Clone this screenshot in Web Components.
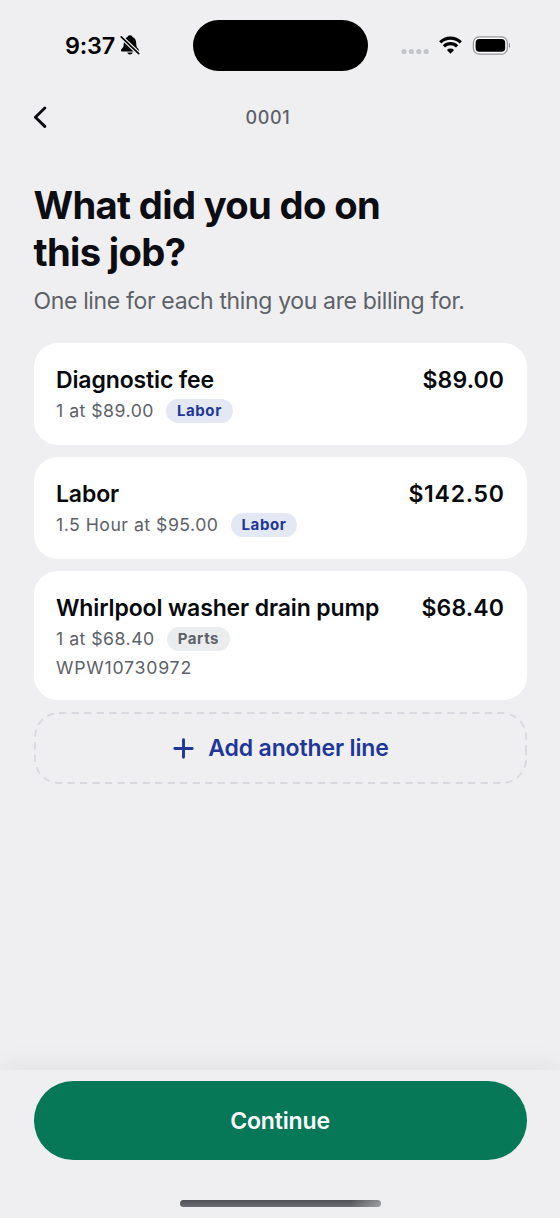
<!DOCTYPE html>
<html lang="en">
<head>
<meta charset="utf-8">
<title>Job lines</title>
<style>
html, body { margin: 0; height: 100%; }
body { background: #efeff1; font-family: Inter, "Liberation Sans", sans-serif; color: #0b0d12; overflow: hidden; }
</style>
</head>
<body>
<job-screen></job-screen>
<script>
const define = (name, html) => customElements.define(name, class extends HTMLElement {
  constructor() {
    super();
    const t = document.createElement('template');
    t.innerHTML = html;
    this.attachShadow({ mode: 'open' }).append(t.content.cloneNode(true));
  }
});

define('status-bar', `
<style>
:host { display: grid; grid-template-columns: 192.5px 175px 1fr; height: 90px; align-items: center; color: #000; }
.left { display: flex; align-items: center; padding-left: 65px; gap: 5px; }
.time { font-size: 23.4px; font-weight: 600; line-height: 28px; padding-top: 1px; white-space: nowrap; letter-spacing: -0.2px; }
.island { height: 51px; border-radius: 26px; background: #000; }
.right { display: flex; align-items: center; padding-left: 32.500px; }
svg { display: block; }
</style>
<div class="left"><span class="time">9:37</span>
<svg width="20" height="22" viewBox="0 0 20 22"><path d="M10 1.2c-1.4 0-2.3.8-2.6 1.9C5 4 3.900 6.200 3.800 9c-.1 3-.5 4.300-1.500 5.300C1.500 15.200 1 15.600 1 16.400c0 .7.500 1.100 1.300 1.100h15.400c.8 0 1.300-.4 1.300-1.100 0-.8-.5-1.200-1.300-2.100-1-1-1.400-2.300-1.500-5.300-.1-2.800-1.200-5-3.600-5.900C12.300 2 11.400 1.200 10 1.200zM7.300 18.600h5.400c-.2 1.200-1.300 2-2.700 2s-2.500-.8-2.700-2z"/><path d="M.8 2.500 18.800 19.700" stroke="#efeff1" stroke-width="4"/><path d="M1.200 2.900 18.700 19.600" stroke="#000" stroke-width="1.600" stroke-linecap="round"/></svg></div>
<div class="island"></div>
<div class="right">
<svg width="110" height="24" viewBox="0 0 110 24"><g fill="#c3c4c8"><circle cx="4" cy="18.500" r="2.600"/><circle cx="11.400" cy="18.500" r="2.600"/><circle cx="18.800" cy="18.500" r="2.600"/><circle cx="26.200" cy="18.500" r="2.600"/></g>
<g fill="none" stroke="#000" stroke-width="3.200"><path d="M40.200 9.300a14.700 14.700 0 0 1 20.600 0"/><path d="M43.900 13.300a9.400 9.400 0 0 1 13.200 0"/></g><path d="M46.900 16.900a5.200 5.200 0 0 1 7.200 0L50.500 20.800z"/>
<rect x="73.400" y="3.900" width="34" height="17.200" rx="5.800" fill="#fafafa" stroke="#97989b" stroke-width="1.300"/><rect x="75.600" y="6.100" width="29.600" height="12.700" rx="3.800"/><path d="M109 10.100c1.900.7 1.900 4.100 0 4.800z" fill="#8e8f93"/></svg>
</div>`);

define('nav-bar', `
<style>
:host { display: grid; grid-template-columns: 1fr auto 1fr; align-items: center; height: 54px; padding: 0 33px; }
svg { display: block; }
span { font-size: 18px; line-height: 24px; font-weight: 500; color: #5d6168; letter-spacing: 0.65px; padding: 1.500px 24px 0 0; }
</style>
<svg width="15" height="22" viewBox="0 0 15 22"><path d="M11.800 2 2.400 11.200l9.400 9.200" fill="none" stroke="#0b0d12" stroke-width="2.900" stroke-linecap="round" stroke-linejoin="round"/></svg>
<span><slot></slot></span>`);

define('page-heading', `
<style>
:host { display: block; padding: 38px 33.500px 0; }
h1 { margin: 0; font-size: 38.2px; line-height: 47px; font-weight: 700; letter-spacing: -0.66px; white-space: nowrap; }
p { margin: 10px 0 0; font-size: 23px; line-height: 30px; color: #5d6168; letter-spacing: -0.35px; white-space: nowrap; }
</style>
<h1><slot></slot></h1><p><slot name="sub"></slot></p>`);

define('kind-pill', `
<style>
:host { display: block; height: 24px; border-radius: 12px; padding: 0 11px; background: #e4e8f5; color: #1e3799; font-size: 15px; line-height: 24px; font-weight: 700; letter-spacing: 0.6px; }
:host([tone="grey"]) { background: #ebecee; color: #5d6168; }
</style><slot></slot>`);

define('line-card', `
<style>
:host { display: block; background: #fff; border-radius: 24px; padding: 22px 22.500px 22px; }
.top { display: flex; justify-content: space-between; font-size: 23px; font-weight: 600; line-height: 30px; white-space: nowrap; height: 34px; color: #07090d; }
.name { letter-spacing: -0.13px; }
.price { letter-spacing: var(--price-spacing, 0.15px); margin-right: calc(var(--price-spacing, 0.15px) * -1); }
.meta { display: flex; align-items: center; gap: 12px; height: 24px; font-size: 17.700px; line-height: 24px; color: #5d6168; white-space: nowrap; letter-spacing: 0.48px; }
::slotted([slot="part"]) { display: block; margin-top: 5px; height: 22.500px; font-size: 17.700px; line-height: 24px; color: #5d6168; letter-spacing: 0.78px; }
</style>
<div class="top"><span class="name"><slot name="name"></slot></span><span class="price"><slot name="price"></slot></span></div>
<div class="meta"><span><slot name="qty"></slot></span><slot></slot></div>
<slot name="part"></slot>`);

define('add-line', `
<style>
:host { display: grid; height: 72px; color: #1e3799; }
svg { display: block; }
.frame, .label { grid-area: 1 / 1; }
.label { display: flex; align-items: center; justify-content: center; gap: 14.500px; padding: 1px 0 0 1.500px; font-size: 23px; font-weight: 600; line-height: 30px; letter-spacing: -0.13px; white-space: nowrap; }
</style>
<svg class="frame" width="493" height="72" viewBox="0 0 493 72"><path d="M492 36V47a24 24 0 0 1-24 24H25A24 24 0 0 1 1 47V25A24 24 0 0 1 25 1H468a24 24 0 0 1 24 24V36" fill="none" stroke="#d7d9de" stroke-width="1.800" stroke-dasharray="7.300 5.220"/></svg>
<div class="label"><svg width="21" height="21" viewBox="0 0 21 21"><path d="M10.500 1.800v17.400M1.800 10.500h17.400" stroke="currentColor" stroke-width="2.900" stroke-linecap="round"/></svg><span><slot></slot></span></div>`);

define('bottom-bar', `
<style>
:host { display: flex; flex-direction: column; align-items: center; height: 148px; box-sizing: border-box; padding: 11px 33.500px 0; background: #efeff1; box-shadow: 0 0 28px rgba(0,0,0,.08); clip-path: inset(-40px 0 0 0); }
button { all: unset; box-sizing: border-box; width: 100%; height: 78.500px; border-radius: 39.250px; background: #067857; color: #fff; font-size: 23px; font-weight: 600; line-height: 80px; text-align: center; letter-spacing: -0.15px; }
.home { width: 201px; height: 7px; margin-top: 40px; border-radius: 4px; background: linear-gradient(90deg, transparent 85%, rgba(239,239,241,.4)), linear-gradient(#505156, #6c6d72); }
</style>
<button><span><slot></slot></span></button><div class="home"></div>`);

define('job-screen', `
<style>
:host { display: flex; flex-direction: column; width: 560px; height: 1218px; }
.list { display: flex; flex-direction: column; gap: 11.800px; padding: 27px 33.500px 0; flex: 1; }
.wide { --price-spacing: 0.75px; }
</style>
<status-bar></status-bar>
<nav-bar>0001</nav-bar>
<page-heading>What did you do on<br>this job?<span slot="sub">One line for each thing you are billing for.</span></page-heading>
<div class="list">
<line-card><span slot="name">Diagnostic fee</span><span slot="price">$89.00</span><span slot="qty">1 at $89.00</span><kind-pill>Labor</kind-pill></line-card>
<line-card class="wide"><span slot="name">Labor</span><span slot="price">$142.50</span><span slot="qty">1.5 Hour at $95.00</span><kind-pill>Labor</kind-pill></line-card>
<line-card><span slot="name">Whirlpool washer drain pump</span><span slot="price">$68.40</span><span slot="qty">1 at $68.40</span><kind-pill tone="grey">Parts</kind-pill><span slot="part">WPW10730972</span></line-card>
<add-line>Add another line</add-line>
</div>
<bottom-bar>Continue</bottom-bar>`);
</script>
</body>
</html>
